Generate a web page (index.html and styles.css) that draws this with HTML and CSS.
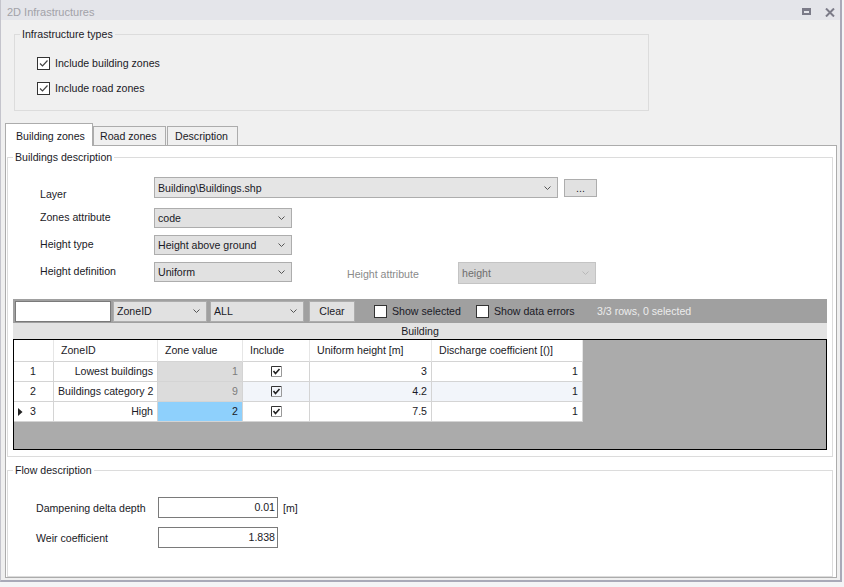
FILE: index.html
```html
<!DOCTYPE html>
<html lang="en">
<head>
    <meta charset="UTF-8">
    <meta name="viewport" content="width=device-width, initial-scale=1.0">
    <title>2D Infrastructures</title>
    <link rel="stylesheet" href="styles.css">
</head>
<body>
    <div class="window">
        <div class="title-bar">
            <span class="title">2D Infrastructures</span>
            <div class="title-buttons">
                <svg class="btn-max" width="9" height="7" viewBox="0 0 9 7"><path d="M0 0H9V7H0Z M2 3V5H7V3Z" fill="#7b7b88" fill-rule="evenodd"/></svg>
                <svg class="btn-close" width="10" height="9" viewBox="0 0 10 9"><path d="M1 0.5L9 8.5M9 0.5L1 8.5" stroke="#7b7b88" stroke-width="2"/></svg>
            </div>
        </div>

        <fieldset class="group types">
            <legend>Infrastructure types</legend>
            <div class="types-body">
                <label class="check">
                    <span class="box checked"><svg width="11" height="11" viewBox="0 0 11 11"><path d="M2 5.5L4.5 8L9.5 2.5" stroke="#444" stroke-width="1.2" fill="none"/></svg></span>
                    Include building zones
                </label>
                <label class="check">
                    <span class="box checked"><svg width="11" height="11" viewBox="0 0 11 11"><path d="M2 5.5L4.5 8L9.5 2.5" stroke="#444" stroke-width="1.2" fill="none"/></svg></span>
                    Include road zones
                </label>
            </div>
        </fieldset>

        <div class="tab-strip">
            <div class="tab tab-building active">Building zones</div>
            <div class="tab tab-road">Road zones</div>
            <div class="tab tab-desc">Description</div>
        </div>

        <div class="tab-page">
            <fieldset class="group buildings">
                <legend>Buildings description</legend>

                <div class="form-row">
                    <span class="label label-layer">Layer</span>
                    <div class="combo combo-layer"><span>Building\Buildings.shp</span><svg width="7" height="4" viewBox="0 0 7 4"><path d="M0.5 0.5L3.5 3.5L6.5 0.5" stroke="#555" fill="none"/></svg></div>
                    <div class="btn btn-browse">...</div>
                </div>
                <div class="form-row">
                    <span class="label">Zones attribute</span>
                    <div class="combo"><span>code</span><svg width="7" height="4" viewBox="0 0 7 4"><path d="M0.5 0.5L3.5 3.5L6.5 0.5" stroke="#555" fill="none"/></svg></div>
                </div>
                <div class="form-row">
                    <span class="label">Height type</span>
                    <div class="combo"><span>Height above ground</span><svg width="7" height="4" viewBox="0 0 7 4"><path d="M0.5 0.5L3.5 3.5L6.5 0.5" stroke="#555" fill="none"/></svg></div>
                </div>
                <div class="form-row">
                    <span class="label">Height definition</span>
                    <div class="combo"><span>Uniform</span><svg width="7" height="4" viewBox="0 0 7 4"><path d="M0.5 0.5L3.5 3.5L6.5 0.5" stroke="#555" fill="none"/></svg></div>
                    <span class="label label-disabled">Height attribute</span>
                    <div class="combo combo-disabled"><span>height</span><svg width="7" height="4" viewBox="0 0 7 4"><path d="M0.5 0.5L3.5 3.5L6.5 0.5" stroke="#b8b8b8" fill="none"/></svg></div>
                </div>

                <div class="filter-bar">
                    <div class="search"></div>
                    <div class="combo combo-filter combo-zone"><span>ZoneID</span><svg width="7" height="4" viewBox="0 0 7 4"><path d="M0.5 0.5L3.5 3.5L6.5 0.5" stroke="#555" fill="none"/></svg></div>
                    <div class="combo combo-filter combo-all"><span>ALL</span><svg width="7" height="4" viewBox="0 0 7 4"><path d="M0.5 0.5L3.5 3.5L6.5 0.5" stroke="#555" fill="none"/></svg></div>
                    <div class="btn btn-clear">Clear</div>
                    <label class="filter-check check-selected"><span class="box"></span>Show selected</label>
                    <label class="filter-check check-errors"><span class="box"></span>Show data errors</label>
                    <span class="status">3/3 rows, 0 selected</span>
                </div>
                <div class="caption-bar">Building</div>

                <div class="grid-area">
                    <div class="grid">
                        <div class="cell head"></div>
                        <div class="cell head">ZoneID</div>
                        <div class="cell head">Zone value</div>
                        <div class="cell head">Include</div>
                        <div class="cell head">Uniform height [m]</div>
                        <div class="cell head">Discharge coefficient [()]</div>

                        <div class="cell row-head"><span class="marker"></span>1</div>
                        <div class="cell num">Lowest buildings</div>
                        <div class="cell num readonly">1</div>
                        <div class="cell center"><svg width="11" height="11" viewBox="0 0 11 11"><path d="M0.5 10.5V0.5H10.5" stroke="#333" fill="none"/><path d="M10.5 0.5V10.5H0.5" stroke="#999" fill="none"/><path d="M2.5 5L4.5 7.5L8.5 3" stroke="#222" stroke-width="1.6" fill="none"/></svg></div>
                        <div class="cell num">3</div>
                        <div class="cell num">1</div>

                        <div class="cell row-head"><span class="marker"></span>2</div>
                        <div class="cell num">Buildings category 2</div>
                        <div class="cell num readonly">9</div>
                        <div class="cell center alt"><svg width="11" height="11" viewBox="0 0 11 11"><path d="M0.5 10.5V0.5H10.5" stroke="#333" fill="none"/><path d="M10.5 0.5V10.5H0.5" stroke="#999" fill="none"/><path d="M2.5 5L4.5 7.5L8.5 3" stroke="#222" stroke-width="1.6" fill="none"/></svg></div>
                        <div class="cell num alt">4.2</div>
                        <div class="cell num alt">1</div>

                        <div class="cell row-head"><span class="marker"><svg width="5" height="8" viewBox="0 0 5 8"><path d="M0 0L4.5 4L0 8Z" fill="#222"/></svg></span>3</div>
                        <div class="cell num">High</div>
                        <div class="cell num selected">2</div>
                        <div class="cell center"><svg width="11" height="11" viewBox="0 0 11 11"><path d="M0.5 10.5V0.5H10.5" stroke="#333" fill="none"/><path d="M10.5 0.5V10.5H0.5" stroke="#999" fill="none"/><path d="M2.5 5L4.5 7.5L8.5 3" stroke="#222" stroke-width="1.6" fill="none"/></svg></div>
                        <div class="cell num">7.5</div>
                        <div class="cell num">1</div>
                    </div>
                </div>
            </fieldset>

            <fieldset class="group flow">
                <legend>Flow description</legend>
                <div class="flow-body">
                    <div class="flow-row">
                        <span class="flow-label">Dampening delta depth</span>
                        <div class="text-input">0.01</div>
                        <span class="unit">[m]</span>
                    </div>
                    <div class="flow-row">
                        <span class="flow-label">Weir coefficient</span>
                        <div class="text-input">1.838</div>
                    </div>
                </div>
            </fieldset>
        </div>
    </div>
</body>
</html>
```

FILE: styles.css
```css
* {
    box-sizing: border-box;
}

html {
    background-color: #f4f4f6;
}

body {
    margin: 0;
    font-family: "Liberation Sans", Arial, sans-serif;
    font-size: 10.6px;
    color: #1a1a26;
}

.window {
    width: 842px;
    height: 582px;
    background-color: #f0f0f0;
    border-left: 1px solid #c4c4cc;
    border-right: 2px solid #a9a9b8;
    border-bottom: 2px solid #a9a9b8;
    overflow: hidden;
}

/* title bar */
.title-bar {
    height: 20px;
    background-color: #e4e5ea;
    display: flex;
    justify-content: space-between;
    align-items: flex-start;
}

.title {
    font-size: 11px;
    line-height: 14px;
    padding: 5px 0 0 6px;
    color: #a2a2a8;
}

.title-buttons {
    display: flex;
    align-items: flex-start;
    padding: 8px 5px 0 0;
}

.btn-close {
    margin-left: 14px;
}

/* group boxes */
.group {
    margin: 0;
    padding: 0;
    min-width: 0;
    border: 1px solid #dcdcdc;
}

.group legend {
    margin-left: 5px;
    padding: 0 2px;
    line-height: 14px;
}

.types {
    margin: 7px 0 0 13px;
    width: 635px;
}

.types-body {
    padding: 12px 0 12px 22px;
}

.check {
    display: flex;
    align-items: center;
    height: 20px;
}

.check + .check {
    margin-top: 5px;
}

.box {
    width: 13px;
    height: 13px;
    border: 1px solid #333;
    background-color: #fff;
    margin-right: 5px;
    display: flex;
    align-items: center;
    justify-content: center;
}

/* tabs */
.tab-strip {
    margin: 12px 0 0 4px;
    height: 22px;
    display: flex;
    align-items: flex-end;
}

.tab {
    border: 1px solid #acacac;
    border-bottom: none;
    background-color: #f0f0f0;
    line-height: 14px;
    height: 19px;
    padding-top: 2px;
}

.tab.active {
    height: 23px;
    margin-bottom: -1px;
    padding-top: 5px;
    background-color: #fff;
    position: relative;
    z-index: 1;
}

.tab-building {
    width: 88px;
    padding-left: 10px;
}

.tab-road {
    width: 73px;
    padding-left: 6px;
}

.tab-desc {
    width: 71px;
    margin-left: 1px;
    padding-left: 7px;
}

.tab-page {
    margin-left: 4px;
    width: 832px;
    height: 433px;
    background-color: #fff;
    border: 1px solid #acacac;
    padding: 4px 0 0 1px;
}

.buildings {
    width: 826px;
    padding: 13px 0 6px 0;
}

/* form rows */
.form-row {
    display: flex;
    align-items: flex-start;
    padding-left: 32px;
}

.form-row + .form-row {
    margin-top: 7px;
}

.label {
    width: 114px;
    line-height: 14px;
    margin-top: 2px;
}

.label-layer {
    margin-top: 10px;
}

.label-disabled {
    width: 111px;
    margin: 5px 0 0 55px;
    color: #8a8a8a;
}

.combo {
    width: 138px;
    height: 20px;
    background-color: #e1e1e1;
    border: 1px solid #adadad;
    display: flex;
    align-items: center;
    justify-content: space-between;
    padding: 0 6px 0 3px;
}

.combo-layer {
    width: 404px;
    height: 21px;
    background-color: #e5e5e5;
}

.combo-disabled {
    height: 22px;
    background-color: #d6d6d6;
    border-color: #c4c4c4;
    color: #6e6e6e;
}

.btn {
    background-color: #e1e1e1;
    border: 1px solid #adadad;
    display: flex;
    align-items: center;
    justify-content: center;
}

.btn-browse {
    width: 33px;
    height: 18px;
    margin: 2px 0 0 6px;
}

/* filter bar */
.filter-bar {
    margin: 15px 5px 0 5px;
    height: 24px;
    background-color: #a0a0a0;
    display: flex;
    align-items: center;
    padding-left: 2px;
}

.search {
    width: 96px;
    height: 21px;
    background-color: #fff;
    border: 1px solid #7a7a7a;
}

.combo-filter {
    width: 94px;
    height: 21px;
}

.combo-zone {
    margin-left: 2px;
}

.combo-all {
    margin-left: 3px;
}

.btn-clear {
    width: 46px;
    height: 21px;
    margin-left: 5px;
}

.filter-check {
    display: flex;
    align-items: center;
}

.check-selected {
    width: 102px;
    margin-left: 19px;
}

.check-errors {
    width: 121px;
}

.status {
    color: #ececec;
}

.caption-bar {
    margin: 0 5px;
    height: 16px;
    line-height: 16px;
    background-color: #e3e3e3;
    text-align: center;
}

/* data grid */
.grid-area {
    margin: 0 5px;
    height: 111px;
    background-color: #ababab;
    border: 1px solid #000;
}

.grid {
    display: grid;
    grid-template-columns: 40px 104px 85px 67px 122px 151px;
    grid-template-rows: 22px repeat(3, 20px);
    width: 569px;
}

.cell {
    background-color: #fff;
    border-right: 1px solid #d4d4d4;
    border-bottom: 1px solid #d4d4d4;
    line-height: 19px;
    padding: 0 4px;
    white-space: nowrap;
    overflow: hidden;
}

.cell.head {
    line-height: 21px;
    padding-left: 7px;
    border-right-color: #e6e6e6;
}

.cell.head:first-child {
    padding-left: 0;
}

.row-head {
    display: flex;
    align-items: center;
}

.marker {
    width: 12px;
    display: flex;
    align-items: center;
}

.num {
    text-align: right;
}

.center {
    display: flex;
    align-items: center;
    justify-content: center;
}

.readonly {
    background-color: #dcdcdc;
    color: #7c7c7c;
}

.selected {
    background-color: #8ed0fc;
}

.alt {
    background-color: #f2f5fa;
}

/* flow description */
.flow {
    width: 826px;
    margin-top: 6px;
}

.flow-body {
    padding: 20px 0 28px 28px;
}

.flow-row {
    display: flex;
    align-items: center;
}

.flow-row + .flow-row {
    margin-top: 9px;
}

.flow-label {
    width: 122px;
}

.text-input {
    width: 120px;
    height: 21px;
    line-height: 19px;
    background-color: #fff;
    border: 1px solid #7a7a7a;
    text-align: right;
    padding-right: 2px;
}

.unit {
    margin-left: 5px;
}
```
